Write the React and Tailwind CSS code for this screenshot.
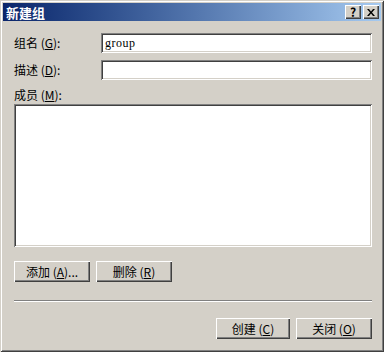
import React from 'react';

const sunken =
  'bg-white shadow-[inset_1px_1px_#808080,inset_-1px_-1px_#ffffff,inset_2px_2px_#404040,inset_-2px_-2px_#d4d0c8]';
const raised =
  'bg-[#d4d0c8] shadow-[inset_1px_1px_#ffffff,inset_-1px_-1px_#404040,inset_-2px_-2px_#808080] flex items-center justify-center text-[12px] text-black';

function Key({ k }) {
  return <span className="underline underline-offset-1">{k}</span>;
}

export default function App() {
  return (
    <div
      className="w-[384px] h-[352px] bg-[#d4d0c8] p-[3px] flex flex-col shadow-[inset_1px_1px_#d4d0c8,inset_-1px_-1px_#404040,inset_2px_2px_#ffffff,inset_-2px_-2px_#808080]"
      style={{ fontFamily: '"Noto Sans CJK SC", "Liberation Sans", sans-serif' }}
    >
      {/* Title bar */}
      <div className="h-[18px] flex items-center justify-between pl-[3px] pr-[2px] bg-gradient-to-r from-[#0a246a] to-[#a6caf0]">
        <span className="text-white font-bold text-[13px] leading-none">新建组</span>
        <div className="flex gap-[2px]">
          <div className={`${raised} w-[16px] h-[14px] font-bold text-[12px] leading-none`}>?</div>
          <div className={`${raised} w-[16px] h-[14px]`}>
            <svg width="8" height="7" viewBox="0 0 8 7">
              <path d="M0 0h2l2 2.5L6 0h2L5 3.5 8 7H6L4 4.5 2 7H0l3-3.5z" fill="#000" />
            </svg>
          </div>
        </div>
      </div>

      {/* Body */}
      <div className="flex flex-col pl-[11px] pr-[9px] text-[12px] text-black">
        <div className="mt-[12px] flex items-center h-[20px]">
          <span className="w-[87px] leading-none">组名 (<Key k="G" />):</span>
          <div className={`${sunken} flex-1 h-[20px] flex items-center pl-[4px]`}>
            <span
              className="text-[12px] tracking-[0.5px]"
              style={{ fontFamily: '"Liberation Serif", serif' }}
            >
              group
            </span>
          </div>
        </div>
        <div className="mt-[7px] flex items-center h-[20px]">
          <span className="w-[87px] leading-none">描述 (<Key k="D" />):</span>
          <div className={`${sunken} flex-1 h-[20px]`} />
        </div>
        <div className="mt-[9px] h-[12px] leading-none">成员 (<Key k="M" />):</div>
        <div className={`${sunken} mt-[3px] h-[143px]`} />

        <div className="mt-[14px] flex gap-[6px]">
          <div className={`${raised} w-[76px] h-[21px]`}>
            添加 (<Key k="A" />)...
          </div>
          <div className={`${raised} w-[76px] h-[21px]`}>
            删除 (<Key k="R" />)
          </div>
        </div>

        <div className="mt-[18px] h-[2px] border-t border-t-[#808080] border-b border-b-white" />

        <div className="mt-[16px] flex justify-end gap-[6px]">
          <div className={`${raised} w-[74px] h-[21px]`}>
            创建 (<Key k="C" />)
          </div>
          <div className={`${raised} w-[76px] h-[21px]`}>
            关闭 (<Key k="O" />)
          </div>
        </div>
      </div>
    </div>
  );
}
